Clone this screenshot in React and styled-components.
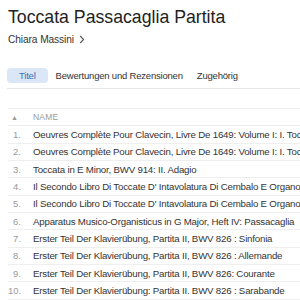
import React from 'react';
import styled, { createGlobalStyle } from 'styled-components';

const Global = createGlobalStyle`
  body {
    margin: 0;
    background: #fff;
    font-family: "Liberation Sans", Arial, sans-serif;
    overflow: hidden;
  }
`;

const Page = styled.div`
  width: 300px;
  height: 300px;
  overflow: hidden;
`;

const Header = styled.div`
  padding: 7px 8px 0 8px;
`;

const Title = styled.h1`
  margin: 0;
  font-size: 17.7px;
  font-weight: 400;
  color: #222;
  line-height: 20px;
  white-space: nowrap;
`;

const Artist = styled.div`
  margin-top: 6px;
  font-size: 10.2px;
  line-height: 13px;
  letter-spacing: -0.1px;
  color: #333;
  display: flex;
  align-items: center;
  gap: 5px;
`;

const Tabs = styled.div`
  margin: 22px 0 0 7px;
  display: flex;
  align-items: center;
  gap: 2px;
  padding-bottom: 5px;
  border-bottom: 1px solid #e6e6e6;
`;

const Tab = styled.div`
  height: 15px;
  padding: 0 ${(p) => (p.$active ? '12px' : '6px')};
  display: flex;
  align-items: center;
  border-radius: 4px;
  font-size: 9.5px;
  letter-spacing: -0.2px;
  white-space: nowrap;
  background: ${(p) => (p.$active ? '#dbe7f7' : 'transparent')};
  color: ${(p) => (p.$active ? '#3a6fb5' : '#333')};
`;

const List = styled.div`
  margin: 19px 0 0 8px;
  border-top: 1px solid #efefef;
`;

const Row = styled.div`
  height: 17.33px;
  display: flex;
  align-items: center;
  border-bottom: 1px solid #efefef;
  box-sizing: border-box;
  white-space: nowrap;
  overflow: hidden;
`;

const Num = styled.span`
  width: 25px;
  flex: none;
  text-align: right;
  font-size: ${(p) => (p.$head ? '7px' : '9.5px')};
  color: #9a9a9a;
  box-sizing: border-box;
  padding-right: ${(p) => (p.$head ? '15px' : '12px')};
`;

const Name = styled.span`
  font-size: ${(p) => (p.$head ? '8.5px' : '9.7px')};
  color: ${(p) => (p.$head ? '#9a9a9a' : '#333')};
  letter-spacing: ${(p) => (p.$head ? '0.2px' : '-0.2px')};
`;

const tracks = [
  'Oeuvres Complète Pour Clavecin, Livre De 1649: Volume I: I. Toccata',
  'Oeuvres Complète Pour Clavecin, Livre De 1649: Volume I: I. Toccata',
  'Toccata in E Minor, BWV 914: II. Adagio',
  "Il Secondo Libro Di Toccate D' Intavolatura Di Cembalo E Organo",
  "Il Secondo Libro Di Toccate D' Intavolatura Di Cembalo E Organo",
  'Apparatus Musico-Organisticus in G Major, Heft IV: Passacaglia',
  'Erster Teil Der Klavierübung, Partita II, BWV 826 : Sinfonia',
  'Erster Teil Der Klavierübung, Partita II, BWV 826 : Allemande',
  'Erster Teil Der Klavierübung, Partita II, BWV 826: Courante',
  'Erster Teil Der Klavierübung: Partita II. BWV 826 : Sarabande',
];

export default function App() {
  return (
    <Page>
      <Global />
      <Header>
        <Title>Toccata Passacaglia Partita</Title>
        <Artist>
          Chiara Massini
          <svg width="6" height="9" viewBox="0 0 6 9">
            <path d="M1.2 1 L4.6 4.5 L1.2 8" fill="none" stroke="#555" strokeWidth="1.1" />
          </svg>
        </Artist>
      </Header>
      <Tabs>
        <Tab $active>Titel</Tab>
        <Tab>Bewertungen und Rezensionen</Tab>
        <Tab>Zugehörig</Tab>
      </Tabs>
      <List>
        <Row>
          <Num $head>▲</Num>
          <Name $head>NAME</Name>
        </Row>
        {tracks.map((t, i) => (
          <Row key={i}>
            <Num>{i + 1}.</Num>
            <Name>{t}</Name>
          </Row>
        ))}
      </List>
    </Page>
  );
}
